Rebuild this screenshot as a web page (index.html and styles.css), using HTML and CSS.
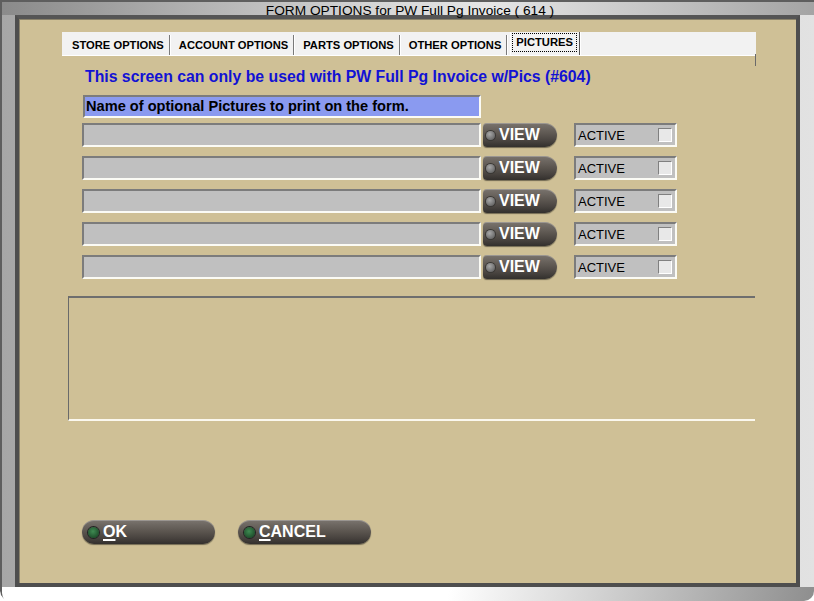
FILE: index.html
```html
<!DOCTYPE html>
<html lang="en">
<head>
  <meta charset="UTF-8" />
  <title>Form Options</title>
  <link rel="stylesheet" href="styles.css">
</head>
<body>
  <div class="window">
    <div class="title">FORM OPTIONS for PW Full Pg Invoice ( 614 )</div>
    <div class="panel">
      <div class="tabs">
        <span class="tab">STORE OPTIONS</span>
        <span class="tab">ACCOUNT OPTIONS</span>
        <span class="tab">PARTS OPTIONS</span>
        <span class="tab">OTHER OPTIONS</span>
        <span class="tab current"><span class="focus">PICTURES</span></span>
      </div>

      <p class="notice">This screen can only be used with PW Full Pg Invoice w/Pics (#604)</p>
      <div class="field heading">Name of optional Pictures to print on the form.</div>

      <!-- 5 picture slots -->
      <div class="rows">
        <div class="row">
          <div class="field"></div>
          <button class="pill view"><i class="dot grey"></i><span>VIEW</span></button>
          <label class="active-box">ACTIVE<span class="check"></span></label>
        </div>
        <div class="row">
          <div class="field"></div>
          <button class="pill view"><i class="dot grey"></i><span>VIEW</span></button>
          <label class="active-box">ACTIVE<span class="check"></span></label>
        </div>
        <div class="row">
          <div class="field"></div>
          <button class="pill view"><i class="dot grey"></i><span>VIEW</span></button>
          <label class="active-box">ACTIVE<span class="check"></span></label>
        </div>
        <div class="row">
          <div class="field"></div>
          <button class="pill view"><i class="dot grey"></i><span>VIEW</span></button>
          <label class="active-box">ACTIVE<span class="check"></span></label>
        </div>
        <div class="row">
          <div class="field"></div>
          <button class="pill view"><i class="dot grey"></i><span>VIEW</span></button>
          <label class="active-box">ACTIVE<span class="check"></span></label>
        </div>
      </div>

      <div class="group"></div>

      <div class="actions">
        <button class="pill wide"><i class="dot green"></i><span><u>O</u>K</span></button>
        <button class="pill wide"><i class="dot green"></i><span><u>C</u>ANCEL</span></button>
      </div>
    </div>
  </div>
</body>
</html>
```

FILE: styles.css
```css
* { box-sizing: border-box; }
body { margin: 0; font-family: "Liberation Sans", Arial, sans-serif; }

/* Outer window chrome */
.window {
  width: 814px;
  height: 601px;
  overflow: hidden;
  padding: 0 14px 14px 15px;
  border-radius: 0 0 10px 10px;
  background:
    linear-gradient(to right, #8a8a8a, #d4d4d4 45%, #e6e6e6 60%, #a4a4a4) top / 100% 15px no-repeat,
    linear-gradient(100deg, #ffffff 55%, #d6d6d6 72%, #8e8e8e) bottom / 100% 14px no-repeat,
    linear-gradient(to right, #a6a6a6, #c8c8c8 40%, #e2e2e2);
  box-shadow: inset 2px 2px 0 #5e5e5e;
}
.title {
  height: 15px;
  padding-left: 5px;
  line-height: 21px;
  text-align: center;
  font-size: 13.7px;
  color: #000;
}

/* Beige page */
.panel {
  height: 572px;
  background: #cfc096;
  border: 4px solid #4e4e4e;
  border-top-color: #555;
  box-shadow: inset 1px 1px 0 #8a826a;
  display: flex;
  flex-direction: column;
  padding-top: 13px;
}

.tabs {
  position: relative;
  margin-left: 43px;
  width: 694px;
  height: 24px;
  padding: 0 4px;
  background: #f2f2f2;
  border-bottom: 1px solid #fff;
  display: flex;
  align-items: flex-end;
  gap: 3px;
}
.tabs::after {
  content: "";
  position: absolute;
  right: 0;
  top: 22px;
  width: 1px;
  height: 12px;
  background: #6a6a6a;
}
.tab {
  height: 20px;
  line-height: 20px;
  padding: 0 5px 0 6px;
  font-size: 11.2px;
  font-weight: bold;
  color: #000;
  border-right: 1px solid #7a7a7a;
  box-shadow: 1px 0 0 #fff;
  white-space: nowrap;
}
.tab.current {
  height: 23px;
  padding: 2px 3px 0 2px;
  border-left: 1px solid #fff;
  border-right: 1px solid #555;
}
.focus {
  display: block;
  line-height: 16px;
  padding: 0 3px 1px;
  outline: 1px dotted #000;
}

.notice {
  margin: 12px 0 0 66px;
  font-size: 15.8px;
  font-weight: bold;
  line-height: 18px;
  color: #1212d4;
}

.field {
  width: 399px;
  height: 24px;
  background: #c0c0c0;
  border: 2px solid;
  border-color: #7c7c7c #fbfbf5 #fbfbf5 #7c7c7c;
}
.field.heading {
  margin: 9px 0 0 64px;
  height: 23px;
  width: 398px;
  padding-left: 1px;
  background: #8a9af0;
  font-size: 14.6px;
  font-weight: bold;
  line-height: 19px;
  color: #000;
}

.rows {
  margin: 5px 0 0 63px;
  display: flex;
  flex-direction: column;
  gap: 9px;
}
.row {
  display: flex;
  align-items: center;
  height: 24px;
}

/* Rounded dark buttons */
.pill {
  height: 24px;
  border: none;
  border-radius: 12px;
  padding: 0 0 0 6px;
  display: flex;
  align-items: center;
  gap: 4px;
  font-family: inherit;
  font-size: 16px;
  font-weight: bold;
  color: #fff;
  background: linear-gradient(#7a746e, #5d5751 45%, #48433f 75%, #33302d);
  box-shadow: inset 0 1px 0 rgba(255, 255, 255, 0.25), 0 1px 1px rgba(0, 0, 0, 0.45);
  cursor: pointer;
}
.pill u { text-decoration-thickness: 2px; text-underline-offset: 2px; }
.view {
  margin-left: 2px;
  width: 74px;
  padding-left: 3px;
  border-radius: 4px 12px 12px 4px;
}
.wide { width: 133px; }

.dot {
  display: block;
  border-radius: 50%;
  flex: 0 0 auto;
}
.dot.grey {
  width: 9px;
  height: 9px;
  background: radial-gradient(circle at 40% 35%, #a8a8a8, #6c6c6c 70%);
  box-shadow: 0 0 0 1px #3a3835;
}
.dot.green {
  width: 11px;
  height: 11px;
  background: radial-gradient(circle at 45% 40%, #3f8a52, #1d4d2a 75%);
  box-shadow: 0 0 0 1px #222;
}

.active-box {
  margin-left: 17px;
  width: 103px;
  height: 24px;
  padding: 0 3px 0 2px;
  background: #c0c0c0;
  border: 2px solid;
  border-color: #7c7c7c #fbfbf5 #fbfbf5 #7c7c7c;
  display: flex;
  align-items: center;
  justify-content: space-between;
  font-size: 13px;
  color: #000;
}
.check {
  width: 14px;
  height: 14px;
  background: #e8e8e8;
  border: 1px solid;
  border-color: #808080 #fff #fff #808080;
}

/* Empty frame under the rows */
.group {
  margin: 17px 0 0 49px;
  width: 687px;
  height: 125px;
  border-top: 2px solid #6e6e6e;
  border-left: 1px solid #6a6a6a;
  border-bottom: 2px solid #fbf8ee;
}

.actions {
  margin: 99px 0 0 63px;
  display: flex;
  gap: 23px;
}
```
